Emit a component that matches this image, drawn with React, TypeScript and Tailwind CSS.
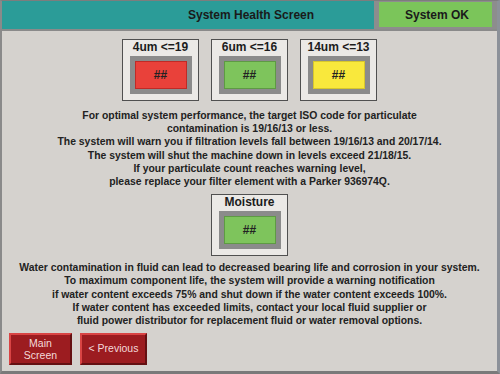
import React from 'react';

const font = { fontFamily: '"Liberation Sans", Arial, sans-serif' };

const Gauge: React.FC<{ label: string; color: string; edge: string }> = ({ label, color, edge }) => (
  <div className="w-[77px] h-[62px] bg-[#ebe9e6] border-[1.5px] border-[#505050] flex flex-col items-center">
    <div className="h-[15px] text-[12px] leading-[15px] font-bold text-[#1c1c1c]">{label}</div>
    <div className="w-[62px] h-[38px] bg-[#8b8b8b] p-[5px] mt-[1px]">
      <div className={`w-full h-full border ${color} ${edge} flex items-center justify-center text-[12px] font-bold text-[#222]`}>
        ##
      </div>
    </div>
  </div>
);

const App: React.FC = () => {
  return (
    <div
      style={font}
      className="w-[500px] h-[374px] bg-[#d5d2ce] border-l-2 border-t border-r-[3px] border-b-[3px] border-l-[#8a8a8a] border-t-[#7d7d7d] border-r-[#8c9199] border-b-[#7a7a7a] flex flex-col overflow-hidden"
    >
      {/* Header */}
      <div className="h-[30px] flex border-b-2 border-[#8a8a8a] shrink-0">
        <div className="flex-1 bg-[#2b9c98] flex items-center pl-[186px]">
          <span className="text-[12px] font-bold text-[#1a1a1a]">System Health Screen</span>
        </div>
        <div className="w-[123px] bg-[#7bc55a] border-x-[5px] border-t border-b-[2px] border-[#8d8d8d] flex items-center justify-center">
          <span className="text-[12px] font-bold text-[#1a1a1a] pl-[3px]">System OK</span>
        </div>
      </div>

      {/* Particulate gauges */}
      <div className="flex justify-center gap-[12px] mt-[8px]">
        <Gauge label="4um <=19" color="bg-[#e9413a]" edge="border-[#c02a26]" />
        <Gauge label="6um <=16" color="bg-[#7ec45c]" edge="border-[#5e9a44]" />
        <Gauge label="14um <=13" color="bg-[#f9e83c]" edge="border-[#d8c72c]" />
      </div>

      <div className="mt-[8px] text-center text-[10.4px] leading-[13.2px] font-bold text-[#222]">
        <p>For optimal system performance, the target ISO code for particulate</p>
        <p>contamination is 19/16/13 or less.</p>
        <p>The system will warn you if filtration levels fall between 19/16/13 and 20/17/14.</p>
        <p>The system will shut the machine down in levels exceed 21/18/15.</p>
        <p>If your particulate count reaches warning level,</p>
        <p>please replace your filter element with a Parker 936974Q.</p>
      </div>

      {/* Moisture gauge */}
      <div className="flex justify-center mt-[6px]">
        <Gauge label="Moisture" color="bg-[#7ec45c]" edge="border-[#5e9a44]" />
      </div>

      <div className="mt-[5px] text-center text-[10.4px] leading-[13.2px] font-bold text-[#222]">
        <p>Water contamination in fluid can lead to decreased bearing life and corrosion in your system.</p>
        <p>To maximum component life, the system will provide a warning notification</p>
        <p>if water content exceeds 75% and shut down if the water content exceeds 100%.</p>
        <p>If water content has exceeded limits, contact your local fluid supplier or</p>
        <p>fluid power distributor for replacement fluid or water removal options.</p>
      </div>

      {/* Navigation */}
      <div className="flex gap-[8px] ml-[7px] mt-[6px]">
        <button className="w-[63px] h-[32px] bg-[#9c1c20] border-2 border-t-[#d94444] border-l-[#d94444] border-b-[#641012] border-r-[#641012] text-[10.5px] leading-[12px] text-[#f3dada] flex flex-col items-center justify-center">
          <span>Main</span>
          <span>Screen</span>
        </button>
        <button className="w-[67px] h-[32px] bg-[#9c1c20] border-2 border-t-[#d94444] border-l-[#d94444] border-b-[#641012] border-r-[#641012] text-[10.5px] text-[#f3dada] flex items-center justify-center">
          &lt; Previous
        </button>
      </div>
    </div>
  );
};

export default App;
